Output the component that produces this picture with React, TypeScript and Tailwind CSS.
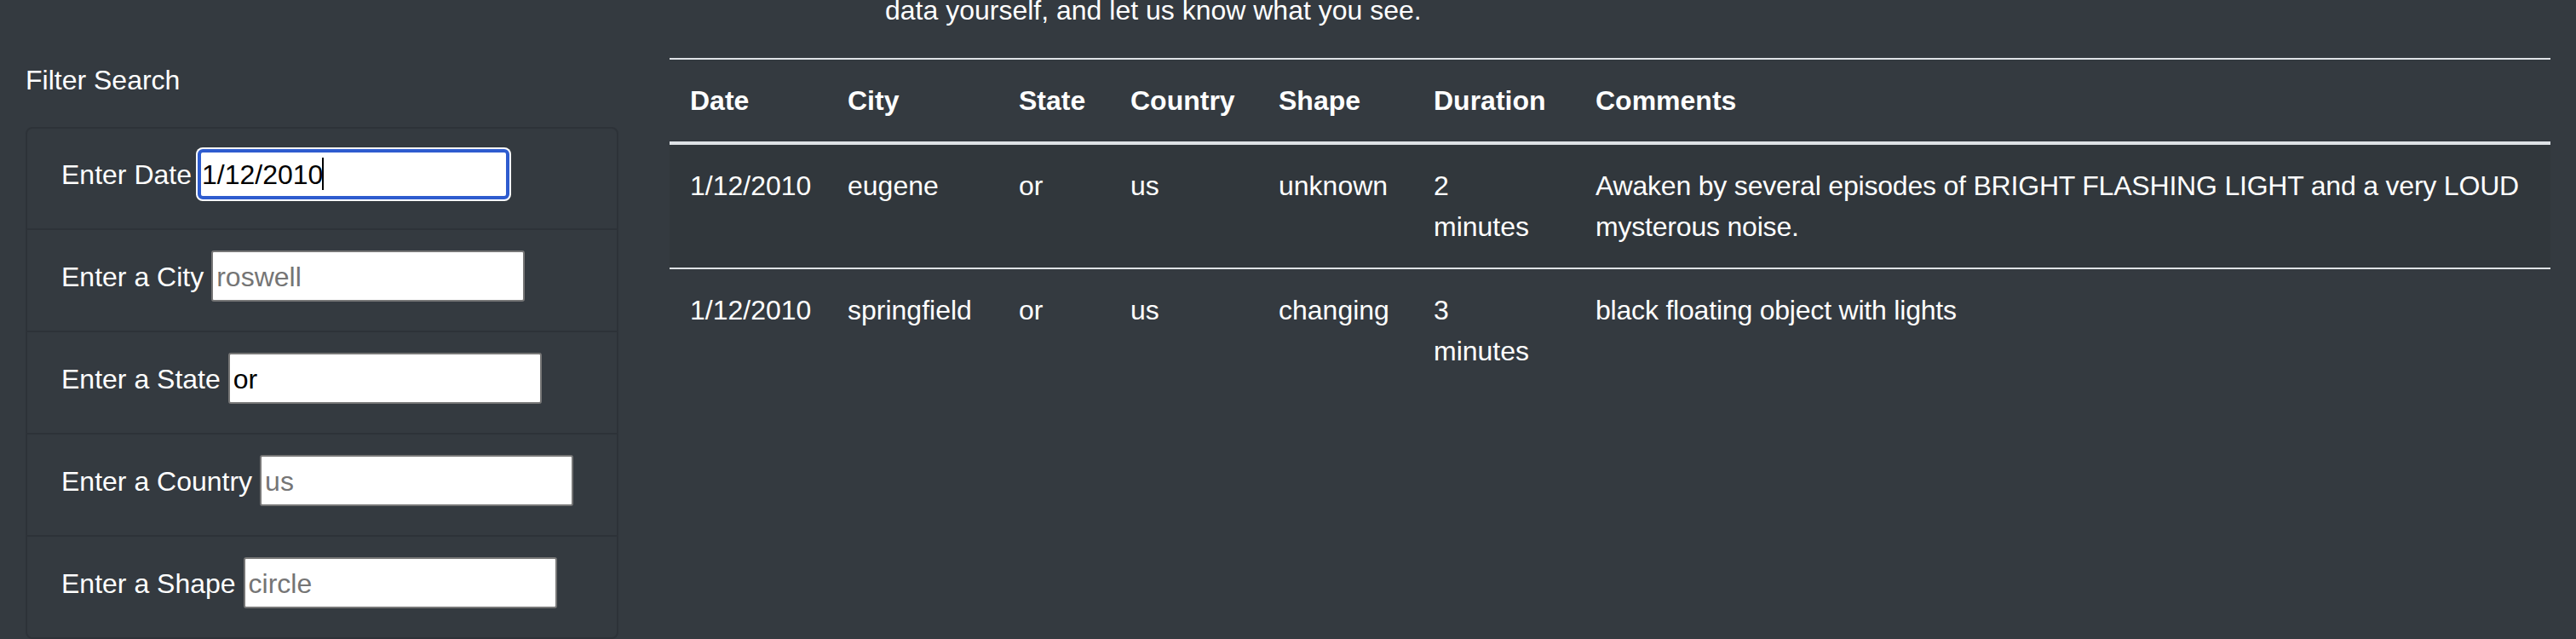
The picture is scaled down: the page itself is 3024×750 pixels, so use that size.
import { useMemo, useState } from "react";

type Sighting = {
  datetime: string;
  city: string;
  state: string;
  country: string;
  shape: string;
  durationMinutes: string;
  comments: string;
};

const sightings: Sighting[] = [
  {
    datetime: "1/12/2010",
    city: "eugene",
    state: "or",
    country: "us",
    shape: "unknown",
    durationMinutes: "2 minutes",
    comments:
      "Awaken by several episodes of BRIGHT FLASHING LIGHT and a very LOUD mysterous noise.",
  },
  {
    datetime: "1/12/2010",
    city: "springfield",
    state: "or",
    country: "us",
    shape: "changing",
    durationMinutes: "3 minutes",
    comments: "black floating object with lights",
  },
];

type FilterKey = "datetime" | "city" | "state" | "country" | "shape";

const filterFields: { key: FilterKey; label: string; placeholder: string }[] = [
  { key: "datetime", label: "Enter Date", placeholder: "1/11/2011" },
  { key: "city", label: "Enter a City", placeholder: "roswell" },
  { key: "state", label: "Enter a State", placeholder: "nm" },
  { key: "country", label: "Enter a Country", placeholder: "us" },
  { key: "shape", label: "Enter a Shape", placeholder: "circle" },
];

const inputBase =
  "box-border h-[60px] w-[368px] rounded-[3px] border-2 border-[#767676] bg-white px-[4px] pt-[3px] pb-[1px] text-[32px] leading-[48px] text-black outline-none placeholder:text-[#757575]";

const focusedInput =
  "box-border h-[59px] w-[366px] -ml-[2px] rounded-[6px] border-4 border-[#2e5ccf] bg-white pl-[1px] pr-[4px] pt-[2px] pb-0 text-[32px] leading-[48px] text-black outline-none shadow-[0_0_0_2px_#ffffff]";

const cell = "border-t-2 border-[#dee2e6] p-[24px] align-top";

export default function App() {
  const [filters, setFilters] = useState<Record<FilterKey, string>>({
    datetime: "1/12/2010",
    city: "",
    state: "or",
    country: "",
    shape: "",
  });

  const rows = useMemo(() => {
    return sightings.filter((s) =>
      (Object.keys(filters) as FilterKey[]).every((k) => {
        const q = filters[k].trim().toLowerCase();
        return !q || s[k].toLowerCase() === q;
      }),
    );
  }, [filters]);

  return (
    <div className="flex min-h-screen overflow-hidden bg-[#343a40] font-['Liberation_Sans',Arial,sans-serif] text-[32px] leading-[48px] text-white">
      <aside className="w-[756px] shrink-0 px-[30px] pt-[70px]">
        <div className="mb-[31px]">Filter Search</div>
        <ul className="rounded-[8px] border-2 border-[#2d3238]">
          {filterFields.map((f, i) => (
            <li
              key={f.key}
              className={
                "relative flex items-baseline gap-[9px] px-[40px] pt-[24px] pb-[34px] " +
                (i > 0 ? "border-t-2 border-[#2d3238]" : "")
              }
            >
              <label htmlFor={f.key}>{f.label}</label>
              <input
                id={f.key}
                type="text"
                value={filters[f.key]}
                placeholder={f.placeholder}
                onChange={(e) => setFilters((prev) => ({ ...prev, [f.key]: e.target.value }))}
                className={i === 0 ? focusedInput : inputBase}
              />
              {i === 0 && (
                <span className="absolute left-[346px] top-[34px] h-[38px] w-[2px] bg-black" />
              )}
            </li>
          ))}
        </ul>
      </aside>

      <main className="flex-1 px-[30px]">
        <p className="-mt-[12px] mb-[32px] pl-[253px]">
          data yourself, and let us know what you see.
        </p>
        <table className="mb-[32px] w-full table-fixed border-collapse">
          <colgroup>
            <col className="w-[185px]" />
            <col className="w-[201px]" />
            <col className="w-[131px]" />
            <col className="w-[174px]" />
            <col className="w-[182px]" />
            <col className="w-[190px]" />
            <col />
          </colgroup>
          <thead>
            <tr>
              {["Date", "City", "State", "Country", "Shape", "Duration", "Comments"].map((h) => (
                <th
                  key={h}
                  className="border-t-2 border-b-4 border-[#dee2e6] p-[24px] text-left align-bottom font-bold"
                >
                  {h}
                </th>
              ))}
            </tr>
          </thead>
          <tbody>
            {rows.map((r, i) => (
              <tr key={r.city + i} className={i % 2 === 0 ? "bg-black/5" : ""}>
                <td className={cell}>{r.datetime}</td>
                <td className={cell}>{r.city}</td>
                <td className={cell}>{r.state}</td>
                <td className={cell}>{r.country}</td>
                <td className={cell}>{r.shape}</td>
                <td className={cell}>
                  <div className="w-min">{r.durationMinutes}</div>
                </td>
                <td className={cell + " pr-[16px] tracking-[-0.2px]"}>{r.comments}</td>
              </tr>
            ))}
          </tbody>
        </table>
      </main>
    </div>
  );
}
